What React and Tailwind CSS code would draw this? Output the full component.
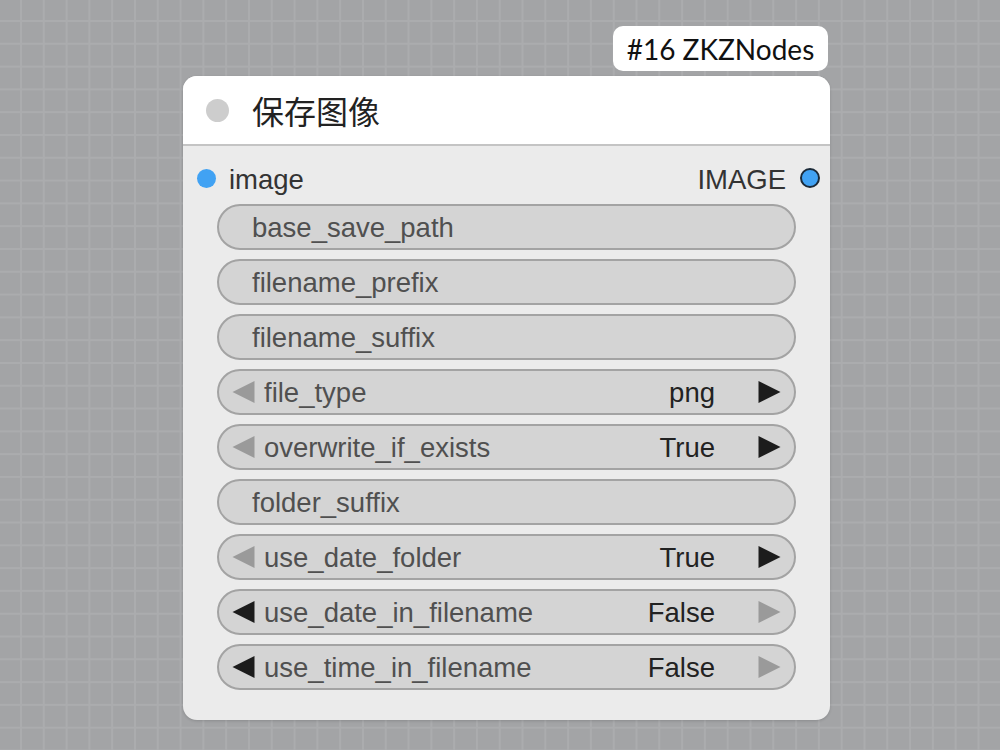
const WIDGETS = [
  { name: 'base_save_path' },
  { name: 'filename_prefix' },
  { name: 'filename_suffix' },
  { name: 'file_type', value: 'png', left: false, right: true },
  { name: 'overwrite_if_exists', value: 'True', left: false, right: true },
  { name: 'folder_suffix' },
  { name: 'use_date_folder', value: 'True', left: false, right: true },
  { name: 'use_date_in_filename', value: 'False', left: true, right: false },
  { name: 'use_time_in_filename', value: 'False', left: true, right: false },
]

function Tri({ dir, on }) {
  const pts = dir === 'left' ? '22,0 22,22 0,11' : '0,0 0,22 22,11'
  return (
    <svg width="23" height="22" viewBox="0 0 22 22" className="shrink-0">
      <polygon points={pts} fill={on ? '#1c1c1c' : '#9a9a9a'} />
    </svg>
  )
}

function Widget({ w }) {
  const combo = w.value !== undefined
  return (
    <div className="h-[46px] rounded-full border-2 border-[#a3a3a3] bg-[#d4d4d4] flex items-center text-[27.5px]">
      {combo ? (
        <>
          <div className="pl-[13px] pr-[9px] flex items-center"><Tri dir="left" on={w.left} /></div>
          <span className="text-[#505050] flex-1 pt-[2px]">{w.name}</span>
          <span className="text-[#222] pt-[2px]">{w.value}</span>
          <div className="pl-[43px] pr-[13px] flex items-center"><Tri dir="right" on={w.right} /></div>
        </>
      ) : (
        <span className="pl-[33px] pt-[2px] text-[#505050]">{w.name}</span>
      )}
    </div>
  )
}

export default function App() {
  return (
    <div
      className="w-[1000px] h-[750px] overflow-hidden bg-[#a3a4a6] bg-[linear-gradient(to_right,#abacae_2px,transparent_2px),linear-gradient(to_bottom,#abacae_2px,transparent_2px)] bg-[size:22.8px_22.8px] bg-[position:20px_20px] pt-[26px] pl-[183px]"
      style={{ fontFamily: '"Liberation Sans", Arial, sans-serif' }}
    >
      <div className="w-[647px]">
        <div className="flex justify-end pr-[2px]">
          <div className="h-[45px] w-[215px] justify-center bg-white rounded-[10px] flex items-center text-[28px] text-[#111]" style={{ fontFamily: 'Lato, sans-serif' }}>
            #16 ZKZNodes
          </div>
        </div>
        <div className="mt-[5px] rounded-[14px] bg-[#ebebeb] overflow-hidden shadow-[0_1px_3px_rgba(0,0,0,0.15)]">
          <div className="h-[70px] bg-white border-b-2 border-[#c4c4c4] flex items-center pl-[23px]">
            <div className="w-[23px] h-[23px] rounded-full bg-[#cdcdcd]" />
            <span className="ml-[23px] text-[32px] text-[#222]" style={{ fontFamily: '"Noto Sans CJK SC", sans-serif' }}>保存图像</span>
          </div>
          <div className="flex items-center justify-between h-[58px] pl-[14px] pr-[10px] pt-[6px] text-[27.5px] text-[#333]">
            <div className="flex items-center">
              <div className="w-[19px] h-[19px] rounded-full bg-[#41a2f3]" />
              <span className="ml-[13px] pt-[3px]">image</span>
            </div>
            <div className="flex items-center">
              <span className="pt-[3px]">IMAGE</span>
              <div className="ml-[14px] w-[20px] h-[20px] rounded-full bg-[#41a2f3] border-2 border-[#1b2a38]" />
            </div>
          </div>
          <div className="flex flex-col gap-[9px] pl-[34px] pr-[34px] pb-[30px]">
            {WIDGETS.map(w => <Widget key={w.name} w={w} />)}
          </div>
        </div>
      </div>
    </div>
  )
}
